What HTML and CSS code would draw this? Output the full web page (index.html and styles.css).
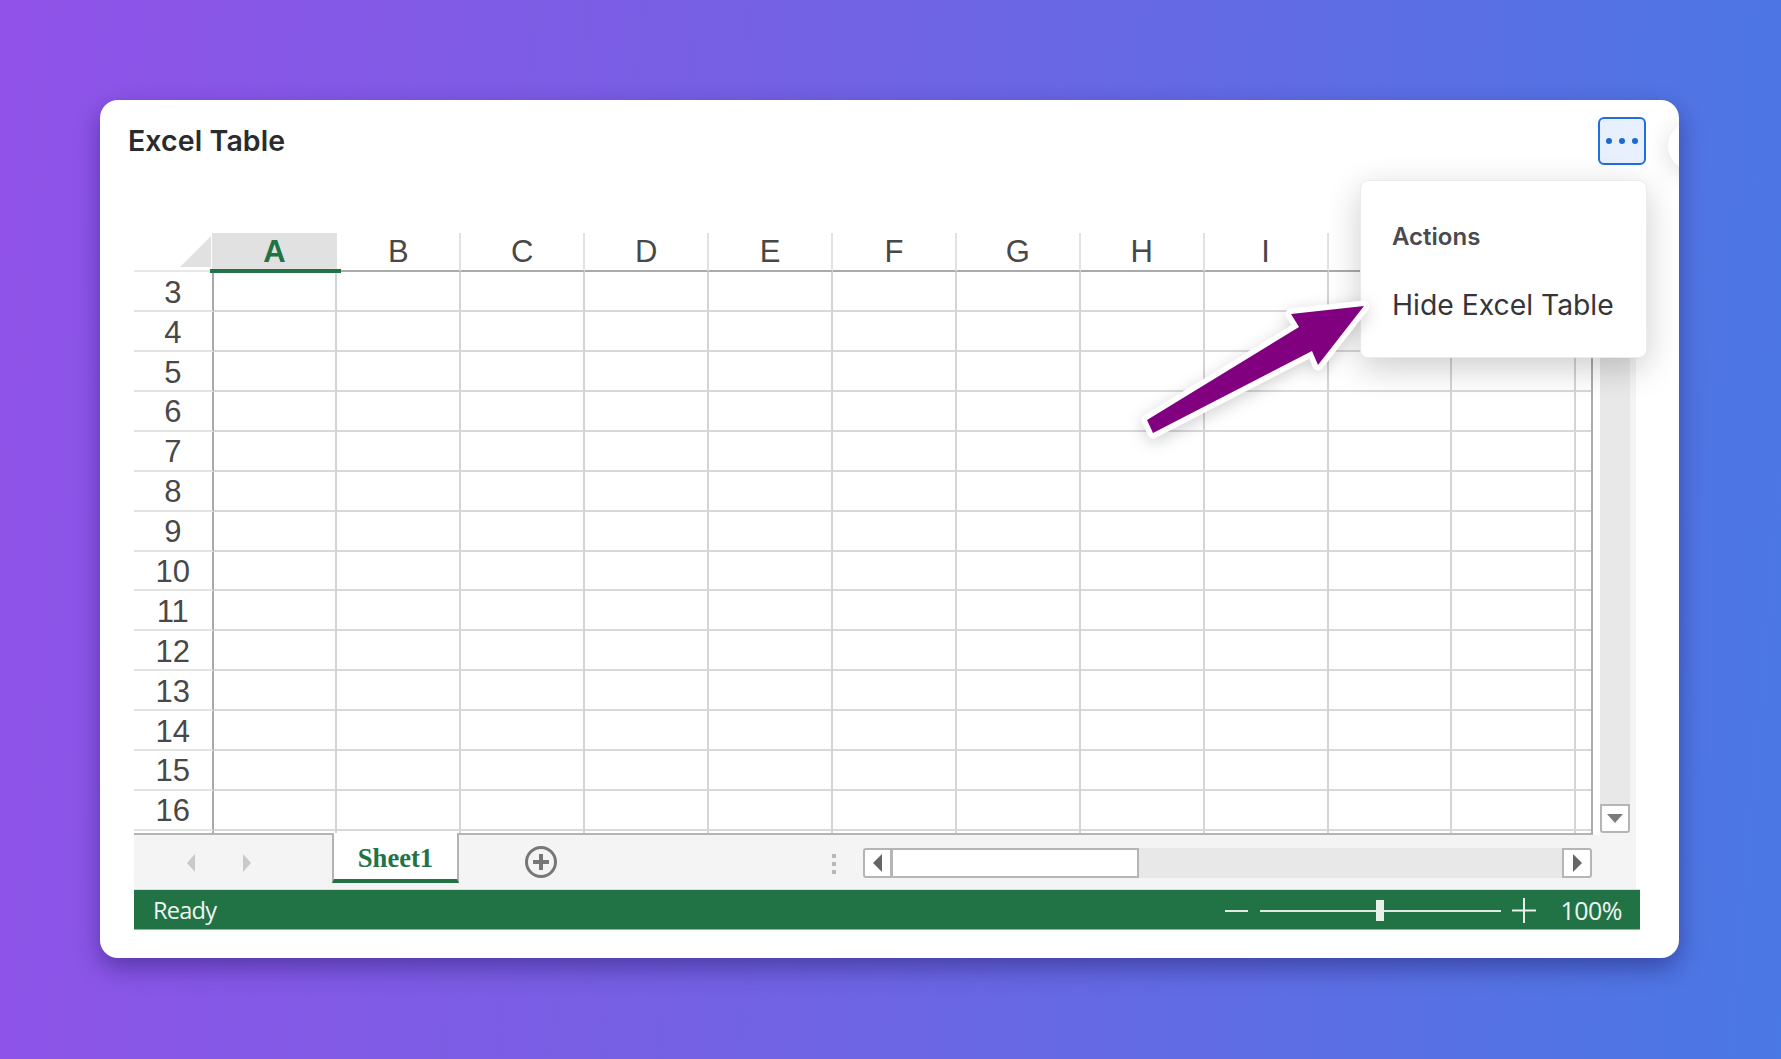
FILE: index.html
```html
<!DOCTYPE html>
<html lang="en">
<head>
<meta charset="utf-8">
<title>Excel Table</title>
<link rel="stylesheet" href="styles.css">
</head>
<body>
<main class="card">
  <header class="card-head">
    <h1 class="title">Excel Table</h1>
    <button class="more" type="button" aria-label="More"><i></i><i></i><i></i></button>
  </header>
  <div class="edge-circle"></div>

  <section class="sheet">
    <div class="sheet-main">
      <div class="grid">
        <div class="corner"><svg width="31" height="31" viewBox="0 0 31 31"><polygon points="31,0 31,31 0,31" fill="#e1e1e1"/></svg></div>
        <div class="ch sel">A</div><div class="ch">B</div><div class="ch">C</div><div class="ch">D</div><div class="ch">E</div><div class="ch">F</div><div class="ch">G</div><div class="ch">H</div><div class="ch">I</div><div class="ch"></div><div class="ch"></div><div class="ch"></div>
        <div class="rh">3</div><div class="c"></div><div class="c"></div><div class="c"></div><div class="c"></div><div class="c"></div><div class="c"></div><div class="c"></div><div class="c"></div><div class="c"></div><div class="c"></div><div class="c"></div><div class="c"></div>
        <div class="rh">4</div><div class="c"></div><div class="c"></div><div class="c"></div><div class="c"></div><div class="c"></div><div class="c"></div><div class="c"></div><div class="c"></div><div class="c"></div><div class="c"></div><div class="c"></div><div class="c"></div>
        <div class="rh">5</div><div class="c"></div><div class="c"></div><div class="c"></div><div class="c"></div><div class="c"></div><div class="c"></div><div class="c"></div><div class="c"></div><div class="c"></div><div class="c"></div><div class="c"></div><div class="c"></div>
        <div class="rh">6</div><div class="c"></div><div class="c"></div><div class="c"></div><div class="c"></div><div class="c"></div><div class="c"></div><div class="c"></div><div class="c"></div><div class="c"></div><div class="c"></div><div class="c"></div><div class="c"></div>
        <div class="rh">7</div><div class="c"></div><div class="c"></div><div class="c"></div><div class="c"></div><div class="c"></div><div class="c"></div><div class="c"></div><div class="c"></div><div class="c"></div><div class="c"></div><div class="c"></div><div class="c"></div>
        <div class="rh">8</div><div class="c"></div><div class="c"></div><div class="c"></div><div class="c"></div><div class="c"></div><div class="c"></div><div class="c"></div><div class="c"></div><div class="c"></div><div class="c"></div><div class="c"></div><div class="c"></div>
        <div class="rh">9</div><div class="c"></div><div class="c"></div><div class="c"></div><div class="c"></div><div class="c"></div><div class="c"></div><div class="c"></div><div class="c"></div><div class="c"></div><div class="c"></div><div class="c"></div><div class="c"></div>
        <div class="rh">10</div><div class="c"></div><div class="c"></div><div class="c"></div><div class="c"></div><div class="c"></div><div class="c"></div><div class="c"></div><div class="c"></div><div class="c"></div><div class="c"></div><div class="c"></div><div class="c"></div>
        <div class="rh">11</div><div class="c"></div><div class="c"></div><div class="c"></div><div class="c"></div><div class="c"></div><div class="c"></div><div class="c"></div><div class="c"></div><div class="c"></div><div class="c"></div><div class="c"></div><div class="c"></div>
        <div class="rh">12</div><div class="c"></div><div class="c"></div><div class="c"></div><div class="c"></div><div class="c"></div><div class="c"></div><div class="c"></div><div class="c"></div><div class="c"></div><div class="c"></div><div class="c"></div><div class="c"></div>
        <div class="rh">13</div><div class="c"></div><div class="c"></div><div class="c"></div><div class="c"></div><div class="c"></div><div class="c"></div><div class="c"></div><div class="c"></div><div class="c"></div><div class="c"></div><div class="c"></div><div class="c"></div>
        <div class="rh">14</div><div class="c"></div><div class="c"></div><div class="c"></div><div class="c"></div><div class="c"></div><div class="c"></div><div class="c"></div><div class="c"></div><div class="c"></div><div class="c"></div><div class="c"></div><div class="c"></div>
        <div class="rh">15</div><div class="c"></div><div class="c"></div><div class="c"></div><div class="c"></div><div class="c"></div><div class="c"></div><div class="c"></div><div class="c"></div><div class="c"></div><div class="c"></div><div class="c"></div><div class="c"></div>
        <div class="rh">16</div><div class="c"></div><div class="c"></div><div class="c"></div><div class="c"></div><div class="c"></div><div class="c"></div><div class="c"></div><div class="c"></div><div class="c"></div><div class="c"></div><div class="c"></div><div class="c"></div>
        <div class="rh end"></div><div class="c end"></div><div class="c end"></div><div class="c end"></div><div class="c end"></div><div class="c end"></div><div class="c end"></div><div class="c end"></div><div class="c end"></div><div class="c end"></div><div class="c end"></div><div class="c end"></div><div class="c end"></div>
      </div>
      <div class="vscroll">
        <div class="vtrack"></div>
        <div class="sbtn down"><svg width="16" height="9" viewBox="0 0 16 9"><polygon points="0,0 16,0 8,9" fill="#7c7c7c"/></svg></div>
      </div>
    </div>

    <div class="tabbar">
      <div class="nav">
        <svg width="10" height="18" viewBox="0 0 10 18"><polygon points="10,0 10,18 2,9" fill="#c9c9c9"/></svg>
        <svg width="10" height="18" viewBox="0 0 10 18"><polygon points="0,0 0,18 8,9" fill="#c9c9c9"/></svg>
      </div>
      <div class="tab">Sheet1</div>
      <svg class="add" width="34" height="34" viewBox="0 0 34 34"><circle cx="17" cy="17" r="14.5" fill="none" stroke="#777" stroke-width="3"/><path d="M17 9v16M9 17h16" fill="none" stroke="#777" stroke-width="4"/></svg>
      <div class="vdots"><i></i><i></i><i></i></div>
      <div class="hscroll">
        <div class="sbtn left"><svg width="9" height="18" viewBox="0 0 9 18"><polygon points="9,0 9,18 0,9" fill="#666"/></svg></div>
        <div class="thumb"></div>
        <div class="htrack"></div>
        <div class="sbtn right"><svg width="9" height="18" viewBox="0 0 9 18"><polygon points="0,0 0,18 9,9" fill="#666"/></svg></div>
      </div>
    </div>

    <footer class="status">
      <span class="ready">Ready</span>
      <div class="zoom">
        <span class="zminus"></span>
        <div class="zline"><span class="zhandle"></span></div>
        <svg class="zplus" width="24" height="25" viewBox="0 0 24 25"><path d="M0 12.5h24M12 0v25" stroke="#e8f0ec" stroke-width="2" fill="none"/></svg>
        <span class="zval">100%</span>
      </div>
    </footer>
  </section>

  <aside class="menu">
    <div class="menu-title">Actions</div>
    <div class="menu-item">Hide Excel Table</div>
  </aside>

  <svg class="arrow" width="260" height="170" viewBox="0 0 260 170">
    <polygon points="234,16 161,24 169,37 17,130 23,143 182,61 188,75" fill="#800080" stroke="#fff" stroke-width="11" stroke-linejoin="round" paint-order="stroke"/>
  </svg>
</main>
</body>
</html>
```
FILE: styles.css
```css
* { box-sizing: border-box; }
html, body { margin: 0; height: 100%; }
body {
  height: 1059px;
  padding: 100px 0 0 100px;
  overflow: hidden;
  background: linear-gradient(95deg, #9152e9 0%, #7560e3 40%, #4a78e4 100%);
  font-family: "Liberation Sans", Arial, sans-serif;
}
.card {
  position: relative;
  width: 1579px;
  height: 858px;
  background: #fff;
  border-radius: 18px;
  box-shadow: 0 10px 24px rgba(20, 10, 80, .4);
}
.card-head {
  display: flex;
  justify-content: space-between;
  align-items: flex-start;
  height: 133px;
  padding: 17px 33px 0 28px;
}
.title {
  margin: 6px 0 0;
  font: 600 28.5px/36px Inter, "Noto Sans", sans-serif;
  color: #2a2b2e;
  letter-spacing: .1px;
}
.more {
  display: flex;
  justify-content: space-between;
  align-items: center;
  width: 48px;
  height: 48px;
  padding: 0 6px;
  background: #e8f0fd;
  border: 2px solid #1f6fe0;
  border-radius: 6px;
}
.more i { width: 6px; height: 6px; border-radius: 50%; background: #1a68dc; }
.edge-circle {
  position: absolute;
  top: 22px;
  right: -37px;
  width: 48px;
  height: 48px;
  border-radius: 50%;
  background: #fff;
  box-shadow: 0 4px 24px rgba(0, 0, 0, .14);
  clip-path: inset(-40px 37px -40px -40px);
}
.sheet { margin: 0 39px 0 34px; }
.sheet-main { display: flex; height: 602px; }
.grid {
  display: grid;
  grid-template-columns: 79.5px repeat(11, 123.9px) 16.6px;
  grid-template-rows: 39.3px repeat(14, 39.9px) 2.1px;
  width: 1459px;
  height: 602px;
  border-right: 2px solid #ababab;
  border-bottom: 2px solid #b4b4b4;
  overflow: hidden;
  color: #484848;
}
.corner {
  display: flex;
  justify-content: flex-end;
  align-items: flex-start;
  padding: 3px 3px 0 0;
  border-bottom: 2px solid #e6e8e6;
}
.ch {
  display: flex;
  align-items: center;
  justify-content: center;
  font-size: 31px;
  padding-top: 1px;
  border-right: 2px solid #e0e4e0;
  border-bottom: 2px solid #aaa;
}
.ch.sel {
  position: relative;
  margin-left: -1.5px;
  padding-left: 1.5px;
  background: #e1e1e1;
  color: #217346;
  font-weight: 700;
  border-bottom-color: transparent;
}
.ch.sel::after {
  content: "";
  position: absolute;
  left: -2px;
  right: -6px;
  bottom: -3px;
  height: 4px;
  background: #217346;
}
.rh {
  display: flex;
  align-items: center;
  justify-content: center;
  font-size: 31px;
  padding-top: 3px;
  border-right: 2px solid #a8a8a8;
  border-bottom: 2px solid #e2e4e2;
}
.c {
  border-right: 2px solid #d4d4d4;
  border-bottom: 2px solid #d8d8d8;
}
.rh.end, .c.end { padding: 0; border-bottom: 0; }
.vscroll {
  display: flex;
  flex-direction: column;
  width: 43px;
  padding: 0 6px 2px 7px;
  background: linear-gradient(90deg, #fff 7px, #f4f4f4 7px);
}
.vtrack { flex: 1; background: #e8e8e8; }
.sbtn {
  display: flex;
  align-items: center;
  justify-content: center;
  width: 30px;
  background: #fff;
  border: 2px solid #b5b5b5;
}
.sbtn.down { height: 29px; border-radius: 0 0 3px 3px; }
.tabbar {
  display: flex;
  align-items: flex-start;
  width: 1502px;
  height: 54px;
  background: #f4f4f4;
}
.nav {
  display: flex;
  justify-content: space-between;
  width: 68px;
  margin: 19px 0 0 51px;
}
.tab {
  width: 127px;
  height: 50px;
  margin: -2px 0 0 79px;
  padding-top: 7px;
  text-align: center;
  font: 700 26.6px/36px "Liberation Serif", serif;
  color: #217346;
  background: #fff;
  border-left: 2px solid #b4b4b4;
  border-right: 2px solid #b4b4b4;
  border-bottom: 4px solid #217346;
}
.add { margin: 10px 0 0 65px; }
.vdots {
  display: flex;
  flex-direction: column;
  gap: 4px;
  margin: 19px 0 0 274px;
}
.vdots i { width: 4px; height: 4px; background: #b8b8b8; }
.hscroll {
  display: flex;
  width: 729px;
  height: 30px;
  margin: 13px 0 0 27px;
}
.hscroll .sbtn { height: 30px; }
.sbtn.left { border-radius: 3px 0 0 3px; border-right-width: 3px; }
.sbtn.right { border-radius: 0 3px 3px 0; }
.thumb {
  width: 246px;
  background: #fff;
  border: 2px solid #b5b5b5;
  border-left: 0;
}
.htrack { flex: 1; background: #e8e8e8; }
.status {
  display: flex;
  justify-content: space-between;
  align-items: center;
  height: 41px;
  padding: 2px 18px 0 19px;
  background: #217346;
  border-top: 1px solid #cfe0d6;
  border-bottom: 1px solid #8fb9a3;
  color: #f0f5f2;
}
.ready { margin-top: -2px; font: 400 23.6px/30px "Open Sans", sans-serif; letter-spacing: -.8px; }
.zoom { display: flex; align-items: center; }
.zminus { width: 23px; height: 2px; background: #dfe9e4; margin-right: 12px; }
.zline { position: relative; width: 241px; height: 2px; background: #dfe9e4; margin-right: 11px; }
.zhandle { position: absolute; left: 116px; top: -10px; width: 8px; height: 21px; background: #e8f0ec; }
.zval { margin: -2px 0 0 24px; font: 400 25px/30px "Open Sans", sans-serif; letter-spacing: -.5px; }
.menu {
  position: absolute;
  top: 79.5px;
  left: 1260px;
  display: flex;
  flex-direction: column;
  gap: 33px;
  width: 287px;
  height: 178px;
  padding: 39.5px 0 0 31px;
  background: #fff;
  border: 1px solid #ebebeb;
  border-radius: 8px;
  box-shadow: 0 10px 34px rgba(0, 0, 0, .2);
}
.menu-title { font: 600 24px/34px Inter, "Noto Sans", sans-serif; color: #4a4b50; }
.menu-item { font: 400 28.3px/36px Inter, "Noto Sans", sans-serif; color: #35363a; }
.arrow {
  position: absolute;
  top: 190px;
  left: 1030px;
  overflow: visible;
  filter: drop-shadow(0 4px 8px rgba(0, 0, 0, .18));
}
```
